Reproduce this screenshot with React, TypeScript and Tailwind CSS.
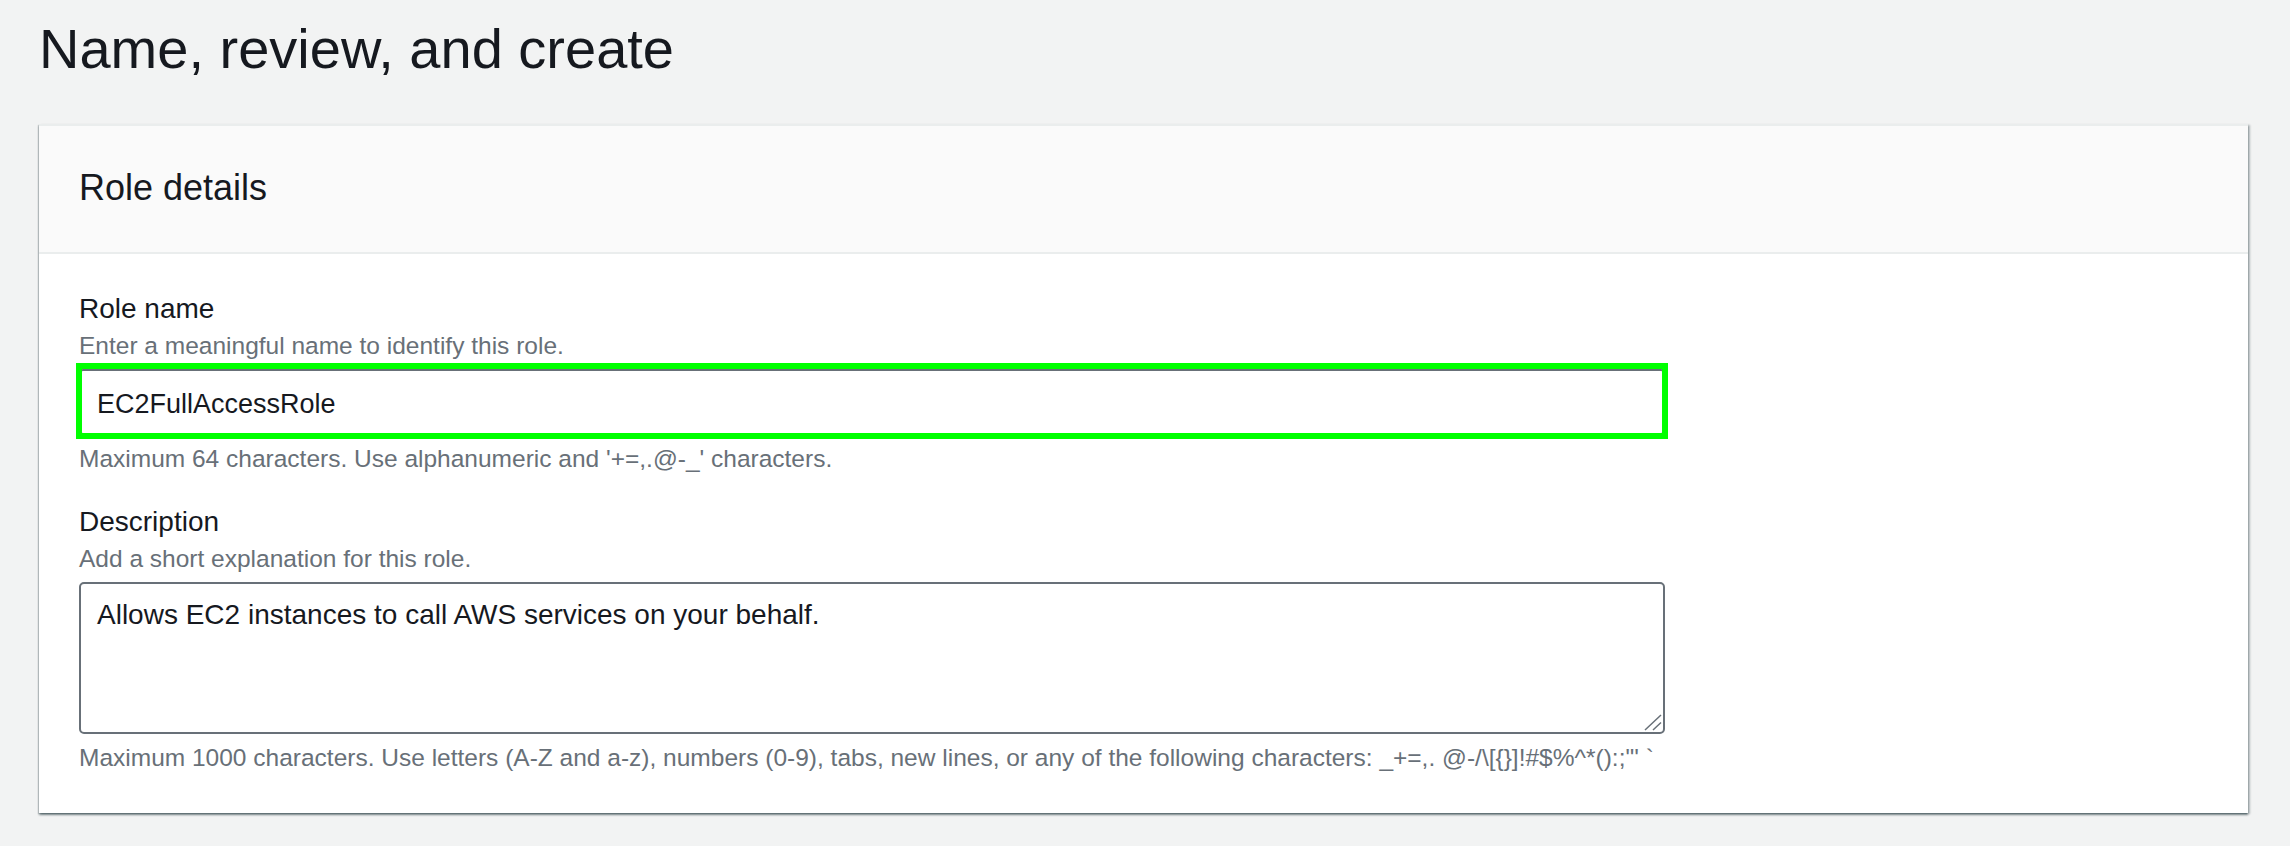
import React from 'react';

const font = 'font-["Liberation_Sans",Arial,sans-serif]';

interface FieldProps {
  label: string;
  description: string;
  constraint: string;
  children: React.ReactNode;
  className?: string;
}

const Field: React.FC<FieldProps> = ({ label, description, constraint, children, className = '' }) => (
  <div className={`flex flex-col ${className}`}>
    <label className="text-[28px] leading-[40px] text-[#16191f]">{label}</label>
    <span className="text-[24.5px] leading-[34px] text-[#687078]">{description}</span>
    {children}
    <span className="mt-[7px] text-[24.5px] leading-[34px] text-[#687078] whitespace-nowrap">{constraint}</span>
  </div>
);

export default function App() {
  return (
    <div className={`min-h-[846px] w-full bg-[#f2f3f3] pl-[39px] pr-[42px] pt-[17px] pb-8 ${font}`}>
      <h1 className="text-[56px] leading-[64px] font-normal text-[#16191f]">Name, review, and create</h1>

      <div className="mt-[43px] bg-white border-t-2 border-[#eaeded] shadow-[0_2px_2px_0_rgba(0,28,36,0.45),2px_1px_2px_0_rgba(0,28,36,0.25),-1px_1px_1px_0_rgba(0,28,36,0.15)]">
        <div className="bg-[#fafafa] border-b-2 border-[#eaeded] px-10 pt-[40px] pb-[42px]">
          <h2 className="text-[36px] leading-[44px] font-normal text-[#16191f]">Role details</h2>
        </div>

        <div className="px-10 pt-[35px] pb-[38px]">
          <Field
            label="Role name"
            description="Enter a meaningful name to identify this role."
            constraint="Maximum 64 characters. Use alphanumeric and '+=,.@-_' characters."
          >
            <div className="relative mt-[6px] w-[1586px]">
              <input
                readOnly
                value="EC2FullAccessRole"
                className="block h-[66px] w-full rounded-[4px] border-2 border-[#687078] bg-white px-4 pt-[4px] text-[27px] text-[#16191f] outline-none"
              />
              <div className="pointer-events-none absolute -top-[6px] -bottom-[4px] -left-[3px] -right-[3px] border-[6px] border-[#00ff00]" />
            </div>
          </Field>

          <Field
            className="mt-[26px]"
            label="Description"
            description="Add a short explanation for this role."
            constraint={'Maximum 1000 characters. Use letters (A-Z and a-z), numbers (0-9), tabs, new lines, or any of the following characters: _+=,. @-/\\[{}]!#$%^*():;"\' `'}
          >
            <div className="relative mt-[6px] w-[1586px]">
              <textarea
                readOnly
                value="Allows EC2 instances to call AWS services on your behalf."
                className="block h-[152px] w-full resize-none rounded-[5px] border-2 border-[#687078] bg-white px-4 pt-[11px] text-[28px] leading-[40px] text-[#16191f] outline-none"
              />
              <svg
                className="pointer-events-none absolute bottom-[3px] right-[3px]"
                width="18"
                height="18"
                viewBox="0 0 18 18"
              >
                <path d="M1 17 L17 2 M9 17 L17 9.5" stroke="#687078" strokeWidth="1.5" fill="none" />
              </svg>
            </div>
          </Field>
        </div>
      </div>
    </div>
  );
}
